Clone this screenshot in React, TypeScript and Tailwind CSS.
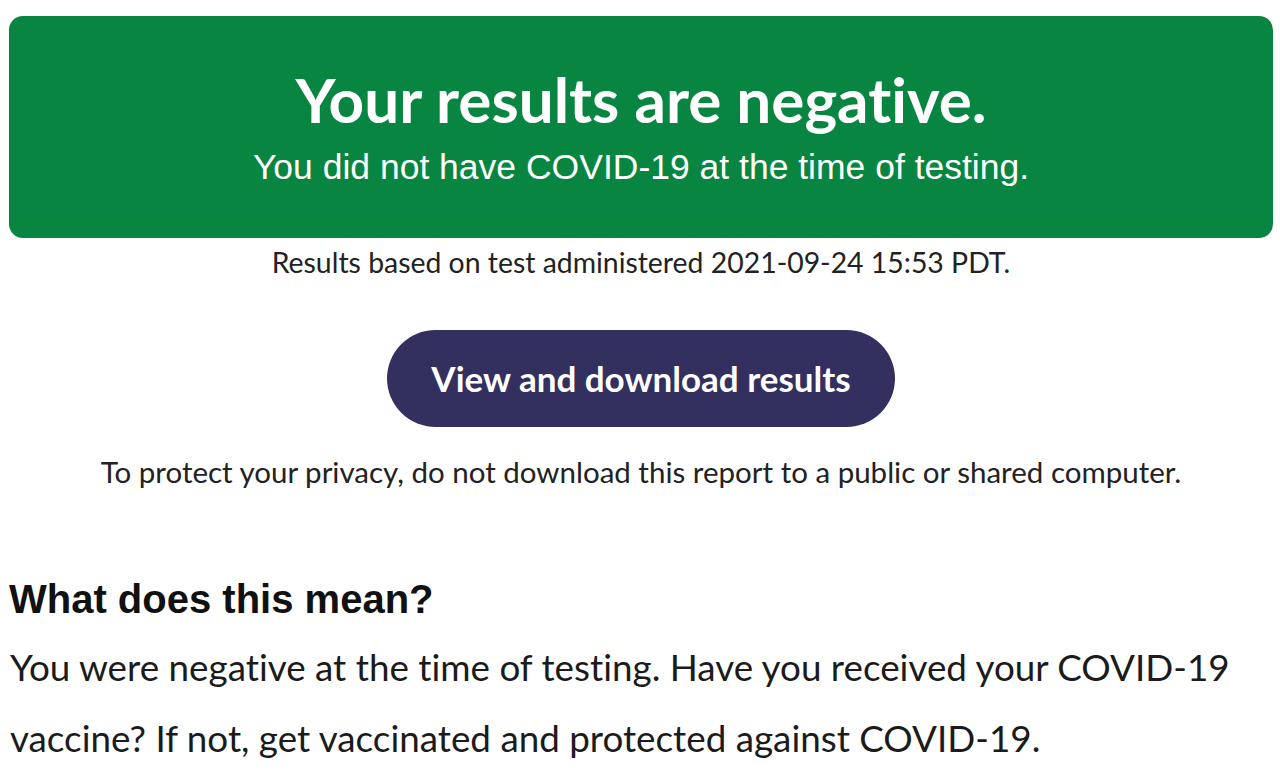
import React from "react";

export default function App() {
  return (
    <div className="w-[1280px] h-[779px] overflow-hidden bg-white text-[#1b1b1b] pl-[9px] pr-[7px] pt-[16px] [font-variant-ligatures:none]">
      <div className="h-[222px] rounded-[14px] bg-[#088540] flex flex-col items-center text-white">
        <h1 className="mt-[48px] text-[62px] leading-[70px] font-bold font-['Lato',sans-serif]">
          Your results are negative.
        </h1>
        <p className="mt-[13px] text-[35.5px] leading-[40px] font-['Liberation_Sans',Arial,sans-serif]">
          You did not have COVID-19 at the time of testing.
        </p>
      </div>
      <p className="mt-[6px] text-center text-[28.4px] leading-[36px] font-['Lato',sans-serif] text-[#222]">
        Results based on test administered 2021-09-24 15:53 PDT.
      </p>
      <div className="mt-[50px] flex justify-center">
        <button className="w-[508px] h-[97px] rounded-full bg-[#33305f] text-white text-[35px] leading-none font-bold font-['Lato',sans-serif]">
          View and download results
        </button>
      </div>
      <p className="mt-[27px] text-center text-[29.5px] leading-[36px] font-['Lato',sans-serif] text-[#222]">
        To protect your privacy, do not download this report to a public or shared computer.
      </p>
      <h2 className="mt-[87px] text-[40px] leading-[44px] font-bold font-['Liberation_Sans',Arial,sans-serif] text-[#111]">
        What does this mean?
      </h2>
      <p className="mt-[11px] pl-[1px] text-[36.8px] leading-[71px] font-['Lato',sans-serif] text-[#1b1b1b]">
        You were negative at the time of testing. Have you received your COVID-19 vaccine? If not, get vaccinated and protected against COVID-19.
      </p>
    </div>
  );
}
